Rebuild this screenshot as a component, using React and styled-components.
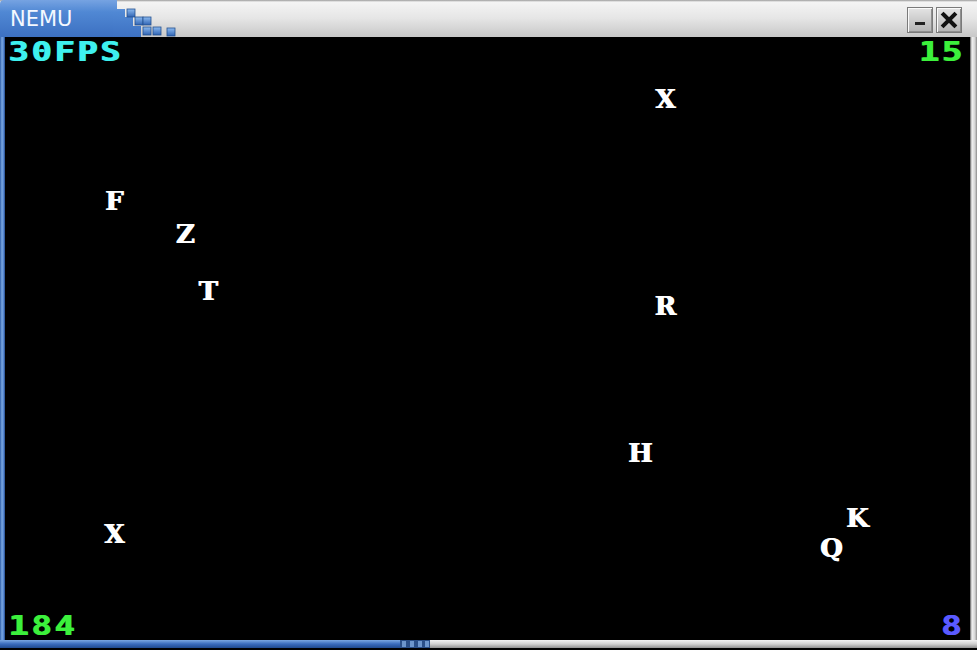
import React from "react";
import styled, { createGlobalStyle } from "styled-components";

const Global = createGlobalStyle`
  html, body {
    margin: 0;
    padding: 0;
    background: #000;
  }
  #root {
    width: 977px;
    height: 650px;
  }
`;

const Window = styled.div`
  width: 977px;
  height: 650px;
  display: flex;
  flex-direction: column;
  overflow: hidden;
  background: #000;
`;

const TitleBar = styled.div`
  height: 37px;
  display: flex;
  align-items: stretch;
  background: linear-gradient(#9a9a9a 0px, #f4f4f4 2px, #e6e6e6 18px, #c9c9c9 36px);
`;

const Tab = styled.div`
  width: 113px;
  display: flex;
  align-items: center;
  padding-left: 10px;
  padding-top: 1px;
  box-sizing: border-box;
  border-top-left-radius: 4px;
  background: linear-gradient(#76a3e2 0px, #5088d4 12px, #3d71c2 36px);
  color: #f4f8ff;
  font-family: "DejaVu Sans", sans-serif;
  font-size: 21px;
`;

const Steps = styled.svg`
  display: block;
  flex: none;
`;

const Spacer = styled.div`
  flex: 1;
`;

const Buttons = styled.div`
  display: flex;
  gap: 3px;
  align-items: center;
  padding-right: 15px;
  padding-top: 2px;
`;

const WinButton = styled.div`
  width: 26px;
  height: 26px;
  box-sizing: border-box;
  border: 1px solid #7a7a7a;
  background: linear-gradient(#e4e4e4, #b4b4b4);
  box-shadow: inset 1px 1px 0 #fafafa, inset -1px -1px 0 #8f8f8f;
  display: flex;
  align-items: center;
  justify-content: center;
`;

const Body = styled.div`
  flex: 1;
  display: flex;
`;

const LeftEdge = styled.div`
  width: 5px;
  background: linear-gradient(90deg, #2f5ea8, #7ba8e2 2px, #4a7cc9 4px, #1c3f7a);
`;

const RightEdge = styled.div`
  width: 7px;
  background: linear-gradient(90deg, #5a5a5a, #f2f2f2 2px, #d4d4d4 5px, #8a8a8a);
`;

const Screen = styled.div`
  flex: 1;
  position: relative;
  background: #000;
  display: flex;
  flex-direction: column;
  justify-content: space-between;
  padding: 3px 6px 2px 3px;
`;

const HudRow = styled.div`
  display: flex;
  justify-content: space-between;
  align-items: center;
  position: relative;
  z-index: 1;
`;

const Hud = styled.span`
  display: inline-block;
  font-family: "DejaVu Sans Mono", monospace;
  font-weight: bold;
  font-size: 26px;
  line-height: 24px;
  letter-spacing: 2px;
  color: ${(p) => p.$color};
  text-shadow: 1px 0 0 ${(p) => p.$color};
  transform: scaleX(1.3);
  transform-origin: ${(p) => (p.$right ? "right" : "left")} center;
`;

const Letter = styled.span`
  position: absolute;
  font-family: "DejaVu Serif", serif;
  font-weight: bold;
  font-size: 26px;
  line-height: 1;
  color: #fff;
  text-shadow: 1px 0 0 #fff;
  transform: translate(-50%, -50%);
`;

const BottomEdge = styled.div`
  height: 10px;
  display: flex;
  align-items: flex-start;
`;

const BottomBlue = styled.div`
  width: 400px;
  height: 8px;
  background: linear-gradient(#7ba8e2, #3a6cbd 4px, #1f4a8e);
`;

const BottomGray = styled.div`
  flex: 1;
  height: 8px;
  background: linear-gradient(#f2f2f2, #d0d0d0 4px, #8f8f8f);
`;

const letters = [
  { ch: "X", x: 660, y: 62 },
  { ch: "F", x: 109, y: 164 },
  { ch: "Z", x: 180, y: 197 },
  { ch: "T", x: 203, y: 254 },
  { ch: "R", x: 660, y: 269 },
  { ch: "H", x: 635, y: 416 },
  { ch: "K", x: 852, y: 481 },
  { ch: "Q", x: 826, y: 511 },
  { ch: "X", x: 109, y: 497 },
];

const stepBlocks = [
  [14, 9], [22, 17], [30, 17], [30, 27], [40, 27], [54, 28],
];

export default function App() {
  return (
    <>
      <Global />
      <Window>
        <TitleBar>
          <Tab>NEMU</Tab>
          <Steps width="66" height="37" viewBox="0 0 66 37">
            <defs>
              <linearGradient id="blk" x1="0" y1="0" x2="0" y2="1">
                <stop offset="0" stopColor="#8cbaf0" />
                <stop offset="1" stopColor="#2f63b3" />
              </linearGradient>
              <linearGradient id="tabfill" x1="0" y1="0" x2="0" y2="1">
                <stop offset="0" stopColor="#76a3e2" />
                <stop offset="0.33" stopColor="#5088d4" />
                <stop offset="1" stopColor="#3d71c2" />
              </linearGradient>
            </defs>
            <path d="M0 0 H4 V9 H12 V17 H20 V26 H28 V37 H0 Z" fill="url(#tabfill)" />
            {stepBlocks.map(([x, y], i) => (
              <rect key={i} x={x} y={y} width="8" height="8" fill="url(#blk)" stroke="#24508f" strokeWidth="0.8" />
            ))}
          </Steps>
          <Spacer />
          <Buttons>
            <WinButton>
              <svg width="14" height="14" viewBox="0 0 14 14">
                <rect x="2" y="9" width="10" height="3" fill="#222" />
              </svg>
            </WinButton>
            <WinButton>
              <svg width="18" height="18" viewBox="0 0 18 18">
                <path d="M3.5 3.5 L14.5 14.5 M14.5 3.5 L3.5 14.5" stroke="#111" strokeWidth="4" strokeLinecap="square" />
              </svg>
            </WinButton>
          </Buttons>
        </TitleBar>
        <Body>
          <LeftEdge />
          <Screen>
            <HudRow>
              <Hud $color="#3ef0ee">30FPS</Hud>
              <Hud $color="#3cf03c" $right>15</Hud>
            </HudRow>
            {letters.map((l, i) => (
              <Letter key={i} style={{ left: l.x, top: l.y }}>{l.ch}</Letter>
            ))}
            <HudRow>
              <Hud $color="#3cf03c">184</Hud>
              <Hud $color="#5a5aff" $right>8</Hud>
            </HudRow>
          </Screen>
          <RightEdge />
        </Body>
        <BottomEdge>
          <BottomBlue />
          <svg width="30" height="8" viewBox="0 0 30 8">
            <rect width="30" height="8" fill="#2a4f88" />
            {[2, 10, 18, 25].map((x) => (
              <rect key={x} x={x} y="1" width="4" height="6" fill="#6d96cc" />
            ))}
          </svg>
          <BottomGray />
        </BottomEdge>
      </Window>
    </>
  );
}
